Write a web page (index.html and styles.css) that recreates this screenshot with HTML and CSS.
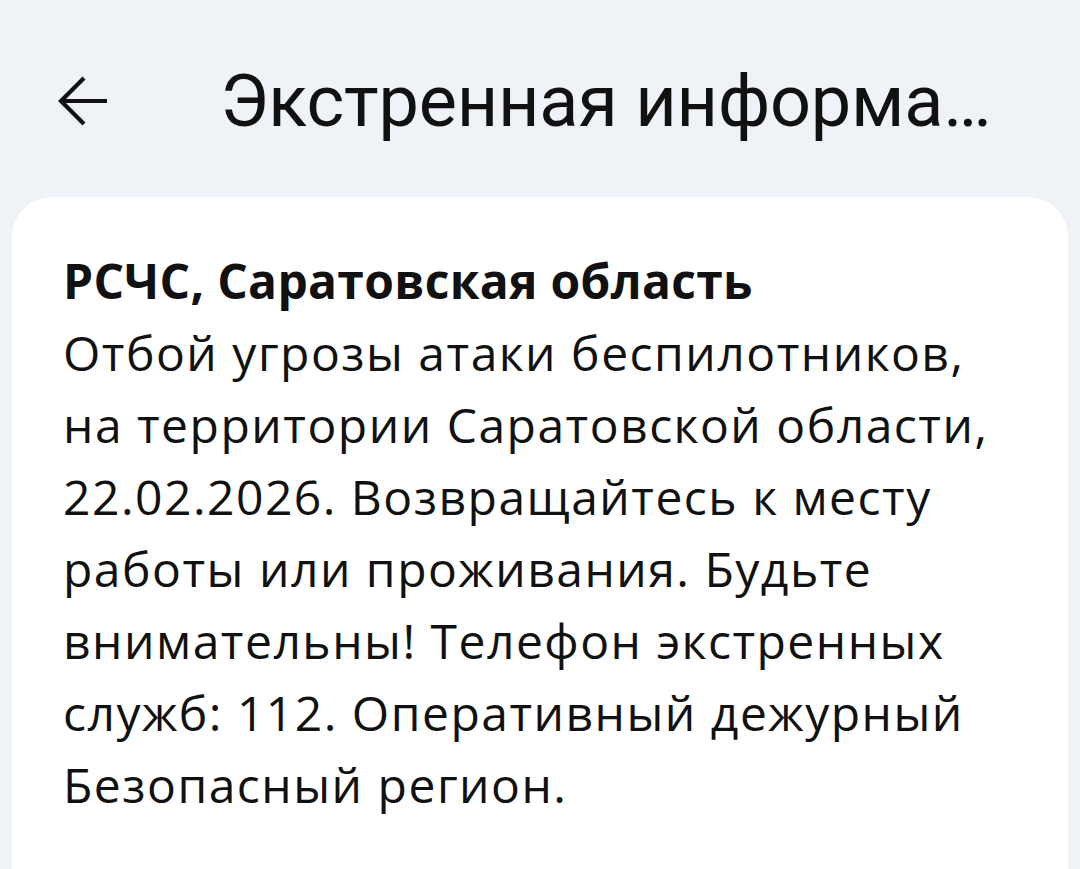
FILE: index.html
```html
<!DOCTYPE html>
<html lang="ru">
<head>
    <meta charset="UTF-8">
    <meta name="viewport" content="width=device-width, initial-scale=1.0">
    <title>Экстренная информация</title>
    <link rel="stylesheet" href="styles.css">
</head>
<body>
    <div class="topbar">
        <button class="back-btn" aria-label="Назад">
            <svg width="56" height="52" viewBox="0 0 56 52" fill="none" stroke="#111" stroke-width="4.2" stroke-linecap="butt" stroke-linejoin="miter">
                <path d="M52 26H6"/>
                <path d="M29 3L6 26L29 49"/>
            </svg>
        </button>
        <div class="topbar-title">Экстренная информация</div>
    </div>

    <div class="card">
        <div class="alert-source">РСЧС, Саратовская область</div>
        <div class="alert-text">
            Отбой угрозы атаки беспилотников,<br>
            на территории Саратовской области,<br>
            22.02.2026. Возвращайтесь к месту<br>
            работы или проживания. Будьте<br>
            внимательны! Телефон экстренных<br>
            служб: 112. Оперативный дежурный<br>
            Безопасный регион.
        </div>
    </div>
</body>
</html>
```

FILE: styles.css
```css
* {
    margin: 0;
    padding: 0;
    box-sizing: border-box;
}

body {
    font-family: "Open Sans", "Noto Sans", sans-serif;
    background: #eff3f7;
    color: #111;
    height: 100vh;
    overflow: hidden;
}

.topbar {
    display: flex;
    align-items: flex-start;
    height: 197px;
    padding-left: 55px;
}

.back-btn {
    background: none;
    border: none;
    width: 56px;
    height: 52px;
    display: flex;
    margin: 75px 109px 0 0;
}

.topbar-title {
    font-family: Roboto, "Noto Sans", sans-serif;
    font-size: 72px;
    line-height: 84px;
    letter-spacing: -0.2px;
    font-weight: 400;
    color: #111;
    white-space: nowrap;
    overflow: hidden;
    text-overflow: ellipsis;
    width: 800px;
    margin-top: 60px;
}

.card {
    background: #fff;
    margin: 0 12px;
    border-radius: 40px 40px 0 0;
    padding: 48px 50px 0 51px;
    height: 700px;
}

.alert-source {
    font-size: 48px;
    font-weight: 700;
    line-height: 72px;
    letter-spacing: 0.3px;
}

.alert-text {
    font-size: 48px;
    line-height: 72px;
    letter-spacing: 1.5px;
}
```
